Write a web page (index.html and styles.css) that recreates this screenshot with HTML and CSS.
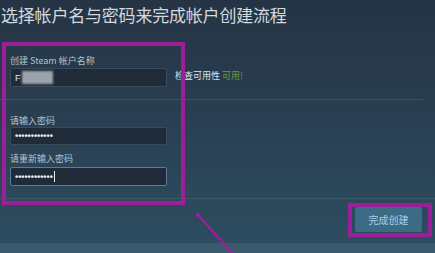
FILE: index.html
```html
<!DOCTYPE html>
<html lang="zh-CN">
<head>
  <meta charset="UTF-8">
  <meta name="viewport" content="width=device-width, initial-scale=1.0">
  <title>创建帐户</title>
  <link rel="stylesheet" href="styles.css">
</head>
<body>
  <div class="page">
    <h1 class="title">选择帐户名与密码来完成帐户创建流程</h1>

    <div class="account">
      <label class="field-label">创建 Steam 帐户名称</label>
      <div class="name-row">
        <div class="input"><span class="typed">F</span><span class="blur"></span></div>
        <div class="check">检查可用性 <span class="ok">可用!</span></div>
      </div>
    </div>

    <div class="divider"></div>

    <div class="passwords">
      <label class="field-label">请输入密码</label>
      <div class="input short"><span class="dots">••••••••••••</span></div>
      <label class="field-label second">请重新输入密码</label>
      <div class="input focused"><span class="dots">••••••••••••</span><span class="caret"></span></div>
    </div>

    <div class="divider lower"></div>

    <div class="actions">
      <button class="finish">完成创建</button>
    </div>

    <div class="footer-strip"></div>

    <!-- annotation marks drawn over the form -->
    <div class="mark mark-fields"></div>
    <div class="mark mark-button"></div>
    <svg class="arrow" width="60" height="60" viewBox="0 0 60 60">
      <line x1="6" y1="4" x2="42" y2="44" stroke="#9a1f98" stroke-width="2.5" stroke-linecap="round"/>
      <circle cx="6" cy="4" r="2.2" fill="#9a1f98"/>
    </svg>
  </div>
</body>
</html>
```

FILE: styles.css
```css
body {
  margin: 0;
  font-family: "Noto Sans CJK SC", "Noto Sans", sans-serif;
  background: #2b4254;
}

.page {
  position: relative;
  width: 435px;
  height: 253px;
  overflow: hidden;
  background: linear-gradient(180deg, #253444 0%, #283c4e 35%, #2b4659 70%, #2d4d61 100%);
}

.title {
  margin: 0;
  padding: 4px 0 0 1px;
  font-size: 17px;
  line-height: 22px;
  font-weight: normal;
  color: #d3d9de;
  letter-spacing: -0.2px;
}

.account {
  padding: 29px 0 0 10px;
}

.field-label {
  display: block;
  font-size: 9px;
  line-height: 12px;
  color: #b6c2cc;
}

.name-row {
  display: flex;
  align-items: center;
  gap: 8px;
  margin-top: 1px;
}

.input {
  box-sizing: border-box;
  width: 157px;
  height: 19px;
  background: #1f2b38;
  border: 1px solid #3a4b5a;
  border-radius: 2px;
  display: flex;
  align-items: center;
  padding-left: 4px;
  color: #e4e8eb;
  font-size: 9px;
}

.typed {
  font-family: "Liberation Sans", Arial, sans-serif;
}

.blur {
  width: 31px;
  height: 13px;
  margin-left: 1px;
  background: #9ba3ac;
  filter: blur(1px);
}

.check {
  font-size: 9px;
  color: #dfe4e8;
  margin-top: -4px;
}

.ok {
  color: #6c9a3e;
}

.divider {
  height: 1px;
  width: 423px;
  margin-top: 12px;
  background: #3c5366;
}

.passwords {
  padding: 15px 0 0 10px;
}

.short {
  height: 18px;
}

.second {
  margin-top: 8px;
  margin-bottom: 2px;
}

.dots {
  font-family: "Liberation Sans", Arial, sans-serif;
  font-size: 9px;
  font-weight: bold;
  color: #eef1f3;
}

.focused {
  border-color: #5f7c96;
}

.caret {
  width: 1px;
  height: 11px;
  margin-left: 1px;
  background: #f2f4f5;
}

.divider.lower {
  width: 435px;
  background: #3b5668;
}

.actions {
  display: flex;
  justify-content: flex-end;
  padding: 8px 13px 0 0;
}

.finish {
  width: 67px;
  height: 25px;
  border: none;
  border-radius: 2px;
  background: #3c6b86;
  color: #a9d1e6;
  font-family: "Noto Sans CJK SC", sans-serif;
  font-size: 10px;
  padding: 0;
}

.footer-strip {
  position: absolute;
  left: 0;
  bottom: 0;
  width: 100%;
  height: 10px;
  background: #3a5a6e;
}

/* purple highlight marks */
.mark {
  position: absolute;
  box-sizing: border-box;
  border: 4px solid #9a1f98;
}

.mark-fields {
  left: 2px;
  top: 42px;
  width: 183px;
  height: 163px;
}

.mark-button {
  left: 348px;
  top: 203px;
  width: 84px;
  height: 34px;
}

.arrow {
  position: absolute;
  left: 192px;
  top: 211px;
}
```
